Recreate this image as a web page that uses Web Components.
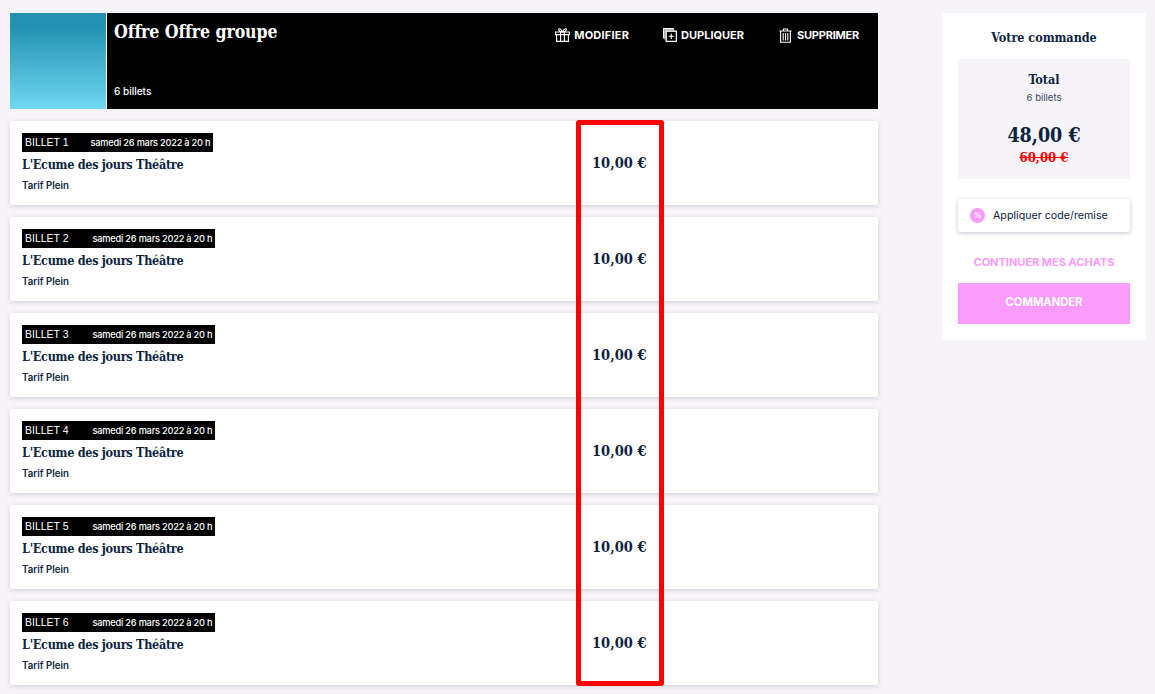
<!DOCTYPE html>
<html lang="fr">
<head>
<meta charset="utf-8">
<title>Votre commande</title>
<style>
html,body{margin:0;padding:0;height:100%;overflow:hidden;}
body{background:#f6f4f8;font-family:"Inter","Liberation Sans",sans-serif;color:#0c2340;}
</style>
</head>
<body>
<order-page>
  <offer-header slot="main" title-text="Offre Offre groupe" count="6 billets"></offer-header>
  <ticket-row slot="main" num="1" date="samedi 26 mars 2022 à 20 h" gap="22"></ticket-row>
  <ticket-row slot="main" num="2" date="samedi 26 mars 2022 à 20 h"></ticket-row>
  <ticket-row slot="main" num="3" date="samedi 26 mars 2022 à 20 h"></ticket-row>
  <ticket-row slot="main" num="4" date="samedi 26 mars 2022 à 20 h"></ticket-row>
  <ticket-row slot="main" num="5" date="samedi 26 mars 2022 à 20 h"></ticket-row>
  <ticket-row slot="main" num="6" date="samedi 26 mars 2022 à 20 h"></ticket-row>
  <order-summary slot="side"></order-summary>
</order-page>

<script>
class OrderPage extends HTMLElement{
    constructor(){
        super();
        this.attachShadow({mode: 'open'});
        this.shadowRoot.innerHTML = `
        <style>
            :host{display:flex;align-items:flex-start;padding:13px 9px 0 10px;position:relative;}
            .main{width:868px;display:flex;flex-direction:column;gap:12px;}
            .side{margin-left:auto;width:204px;}
            /* the red box drawn over the price column */
            .mark{position:absolute;left:576px;top:120px;width:78px;height:556px;border:5px solid #ff0000;border-radius:3px;pointer-events:none;}
        </style>
        <div class="main"><slot name="main"></slot></div>
        <div class="side"><slot name="side"></slot></div>
        <div class="mark"></div>`;
    }
}

class OfferHeader extends HTMLElement{
    connectedCallback(){
        this.attachShadow({mode: 'open'});
        this.shadowRoot.innerHTML = `
        <style>
            :host{display:flex;height:96px;background:#000;color:#fff;}
            .pic{width:96px;background:linear-gradient(180deg,#2392b2 0%,#2392b2 15%,#6fd8f2 100%);border-right:1px solid #fff;}
            .body{flex:1;display:flex;flex-direction:column;justify-content:space-between;padding:7px 0 11px 7px;}
            h1{margin:0;font:700 17.6px/24px "DejaVu Serif","Liberation Serif",serif;font-stretch:condensed;letter-spacing:-.1px;}
            .count{font:500 10px/14px "Inter","Liberation Sans",sans-serif;}
            .actions{display:flex;padding-top:7px;padding-right:19px;}
            .actions span.act{display:flex;align-items:center;gap:4px;font:700 11px/16px "Inter","Liberation Sans",sans-serif;}
            .act + .act{margin-left:34px;}
            .act.edit{letter-spacing:.2px;}
            .act.del{letter-spacing:-.22px;margin-left:35px;}
            .actions span.act.del{gap:5px;}
            svg{display:block;fill:none;stroke:#fff;stroke-width:1.1;}
            .top{display:flex;justify-content:space-between;align-items:flex-start;}
        </style>
        <div class="pic"></div>
        <div class="body">
            <div class="top">
                <h1>${this.getAttribute('title-text')}</h1>
                <div class="actions">
                    <span class="act edit"><svg width="15" height="14" viewBox="0 0 15 14"><path d="M.6 4h13.800v2.600H.6zM1.600 6.600V13.400h11.800V6.600M5.600 4v9.400M9.400 4v9.400M7.500 4C6 1 4.800.4 4 .8S3.400 3.400 7.500 4zM7.500 4C9 1 10.200.4 11 .8S11.600 3.400 7.500 4z"/></svg>MODIFIER</span>
                    <span class="act"><svg width="14" height="14" viewBox="0 0 14 14"><path d="M.6 10.500V.6h10.200M2 11.500V2h9.500"/><rect x="3.200" y="3.200" width="10.200" height="10.200" stroke-width="1.300"/><path d="M8.300 5.700v5.200M5.700 8.300h5.200"/></svg>DUPLIQUER</span>
                    <span class="act del"><svg width="13" height="15" viewBox="0 0 13 15"><path d="M.4 3h12.200M4.400 3V1h4.200v2M1.600 3v11.300h9.800V3M4.200 5v7.500M6.500 5v7.500M8.800 5v7.500"/></svg>SUPPRIMER</span>
                </div>
            </div>
            <div class="count">${this.getAttribute('count')}</div>
        </div>`;
    }
}

class TicketRow extends HTMLElement{
    connectedCallback(){
        const gap = this.getAttribute('gap') || 24;
        this.attachShadow({mode: 'open'});
        this.shadowRoot.innerHTML = `
        <style>
            :host{display:flex;height:84px;background:#fff;border-radius:3px;box-shadow:0 1px 4px rgba(60,60,80,.22);box-sizing:border-box;padding:12px 12px 0;color:#0c2340;}
            .info{width:570px;}
            .tag{display:flex;width:fit-content;gap:${gap}px;background:#000;color:#fff;height:19px;align-items:center;padding:0 3px;box-sizing:border-box;}
            .tag b{font:400 10.5px/14px "Liberation Sans",sans-serif;position:relative;top:-1px;}
            .tag span{font:500 9.2px/14px "Inter","Liberation Sans",sans-serif;letter-spacing:-.2px;}
            h3{margin:4px 0 0;font:700 12.5px/18px "DejaVu Serif","Liberation Serif",serif;font-stretch:condensed;letter-spacing:-.28px;}
            .tarif{margin-top:5px;font:600 9.7px/14px "Inter","Liberation Sans",sans-serif;}
            .price{padding-top:20px;font:700 14.5px/20px "DejaVu Serif","Liberation Serif",serif;font-stretch:condensed;}
        </style>
        <div class="info">
            <div class="tag"><b>BILLET ${this.getAttribute('num')}</b><span>${this.getAttribute('date')}</span></div>
            <h3>L'Ecume des jours Théâtre</h3>
            <div class="tarif">Tarif Plein</div>
        </div>
        <div class="price">10,00 €</div>`;
    }
}

class OrderSummary extends HTMLElement{
    constructor(){
        super();
        this.attachShadow({mode: 'open'});
        this.shadowRoot.innerHTML = `
        <style>
            :host{display:block;background:#fff;padding:16px;height:327px;box-sizing:border-box;text-align:center;color:#0c2340;}
            h2{margin:0;font:700 12.5px/18px "DejaVu Serif","Liberation Serif",serif;font-stretch:condensed;letter-spacing:-.03px;}
            .box{margin-top:12px;height:120px;background:#f6f4f8;padding-top:12px;box-sizing:border-box;}
            .total{font:700 12.5px/18px "DejaVu Serif","Liberation Serif",serif;font-stretch:condensed;}
            .sub{font:400 9.5px/12px "Inter","Liberation Sans",sans-serif;margin-top:3px;color:#34475f;}
            .amount{margin-top:20px;font:700 19.5px/24px "DejaVu Serif","Liberation Serif",serif;font-stretch:condensed;}
            .old{font:700 13px/16px "DejaVu Serif","Liberation Serif",serif;font-stretch:condensed;color:#ff0000;text-decoration:line-through;margin-top:2px;}
            .code{margin-top:20px;height:33px;background:#fff;border-radius:3px;box-shadow:0 1px 4px rgba(50,70,100,.3);display:flex;align-items:center;gap:8px;padding-left:12px;font:400 10.7px/14px "Inter","Liberation Sans",sans-serif;}
            .pct{width:15px;height:15px;border-radius:50%;background:#fa9bfb;color:#fff;font:700 8px/15px "Inter","Liberation Sans",sans-serif;flex:none;}
            .more{margin-top:23px;font:700 11px/14px "Inter","Liberation Sans",sans-serif;color:#fa9bfb;}
            .go{margin-top:14px;height:41px;background:#fa9bfb;color:#fff;font:700 11.2px/38px "Inter","Liberation Sans",sans-serif;}
        </style>
        <h2>Votre commande</h2>
        <div class="box">
            <div class="total">Total</div>
            <div class="sub">6 billets</div>
            <div class="amount">48,00 €</div>
            <div class="old">60,00 €</div>
        </div>
        <div class="code"><span class="pct">%</span>Appliquer code/remise</div>
        <div class="more">CONTINUER MES ACHATS</div>
        <div class="go">COMMANDER</div>`;
    }
}

window.customElements.define('order-page', OrderPage);
window.customElements.define('offer-header', OfferHeader);
window.customElements.define('ticket-row', TicketRow);
window.customElements.define('order-summary', OrderSummary);
</script>
</body>
</html>
